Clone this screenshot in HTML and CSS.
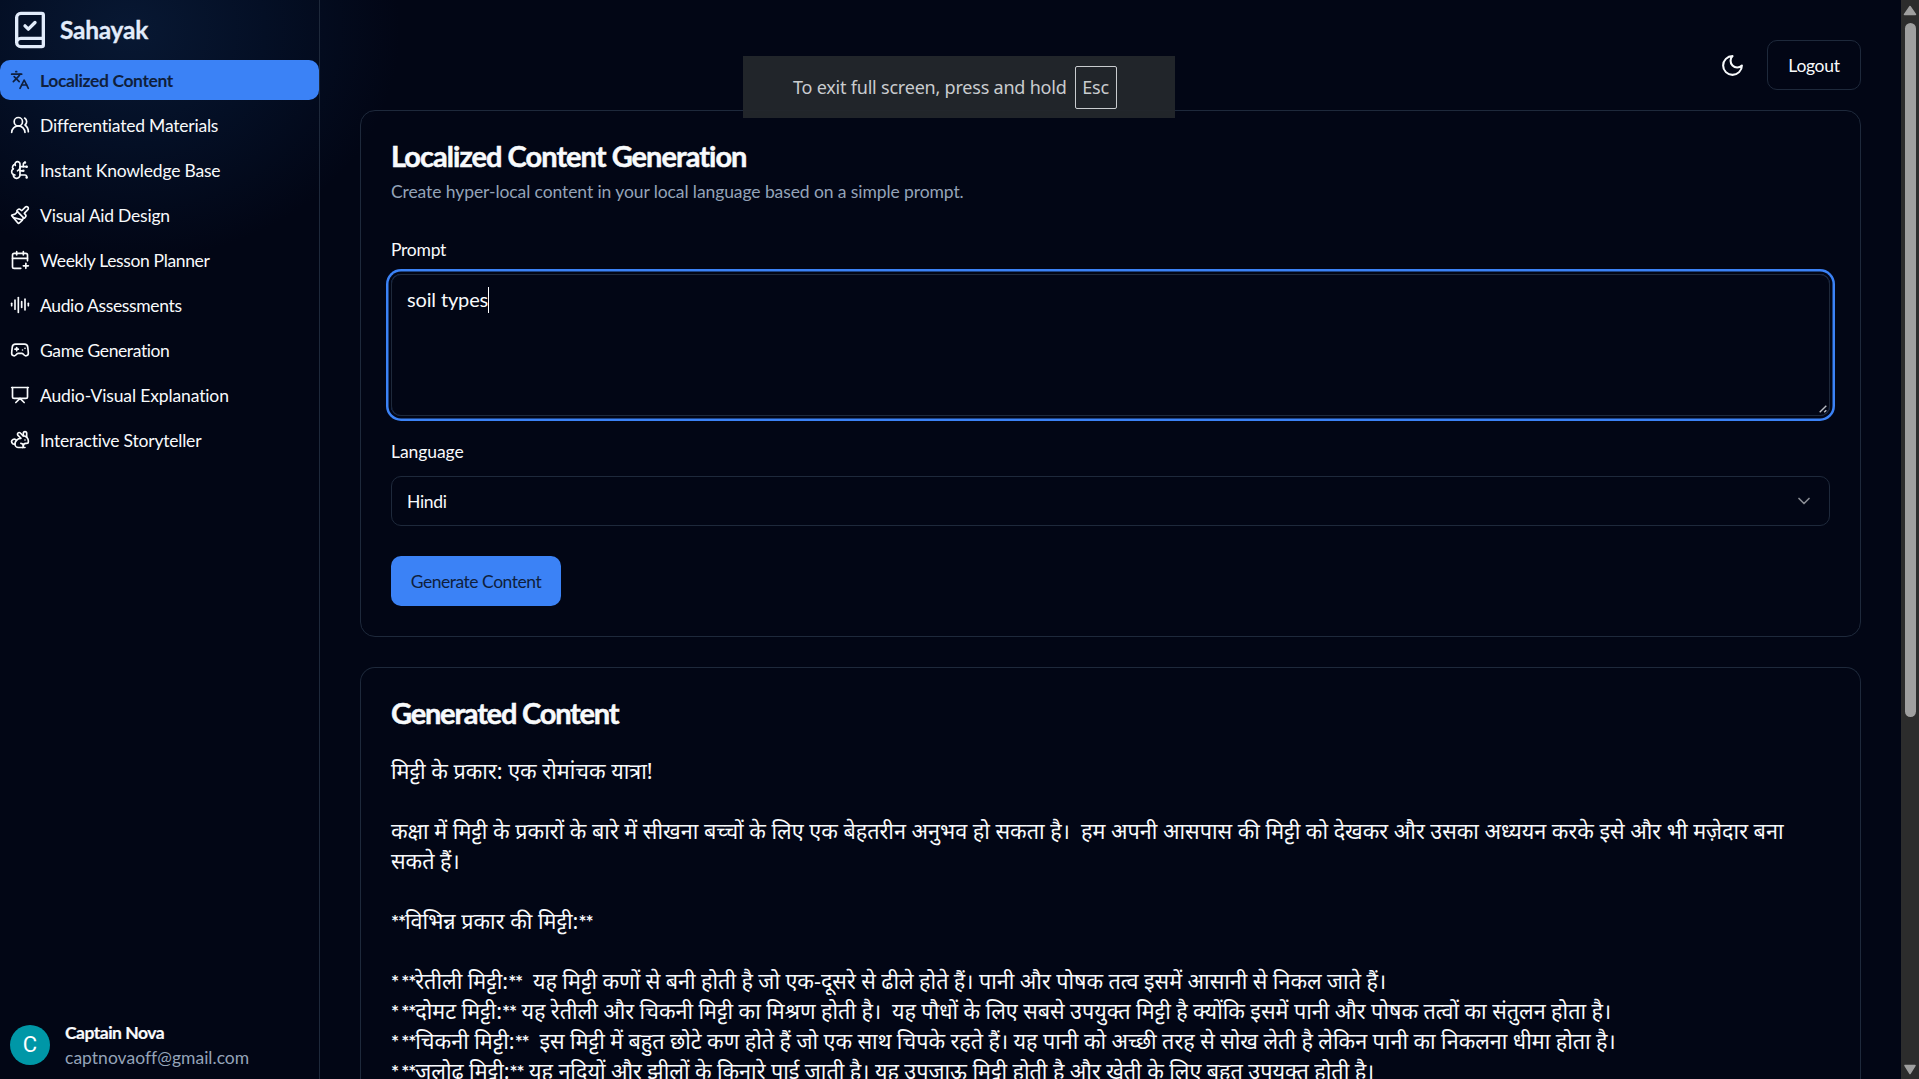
FILE: index.html
```
<!DOCTYPE html>
<html lang="en">
<head>
<meta charset="utf-8">
<title>Sahayak</title>
<link rel="stylesheet" href="styles.css">
</head>
<body>
<div class="app">
  <aside class="sidebar">
    <header class="brand">
      <svg class="icon brand-icon" viewBox="0 0 24 24"><path d="M4 19.5v-15A2.5 2.5 0 0 1 6.5 2H19a1 1 0 0 1 1 1v18a1 1 0 0 1-1 1H6.5a1 1 0 0 1 0-5H20"/><path d="m9 9.5 2 2 4-4"/></svg>
      <span class="brand-name">Sahayak</span>
    </header>
    <nav class="nav">
      <a class="nav-item active"><svg class="icon" viewBox="0 0 24 24"><path d="m5 8 6 6"/><path d="m4 14 6-6 2-3"/><path d="M2 5h12"/><path d="M7 2h1"/><path d="m22 22-5-10-5 10"/><path d="M14 18h6"/></svg><span>Localized Content</span></a>
      <a class="nav-item"><svg class="icon" viewBox="0 0 24 24"><path d="M18 21a8 8 0 0 0-16 0"/><circle cx="10" cy="8" r="5"/><path d="M22 20c0-3.37-2-6.5-4-8a5 5 0 0 0-.45-8.3"/></svg><span>Differentiated Materials</span></a>
      <a class="nav-item"><svg class="icon" viewBox="0 0 24 24"><path d="M12 5a3 3 0 1 0-5.997.125 4 4 0 0 0-2.526 5.77 4 4 0 0 0 .556 6.588A4 4 0 1 0 12 18Z"/><path d="M9 13a4.5 4.5 0 0 0 3-4"/><path d="M6.003 5.125A3 3 0 0 0 6.401 6.5"/><path d="M3.477 10.896a4 4 0 0 1 .585-.396"/><path d="M6 18a4 4 0 0 1-1.967-.516"/><path d="M12 13h4"/><path d="M12 18h6a2 2 0 0 1 2 2v1"/><path d="M12 8h8"/><path d="M16 8V5a2 2 0 0 1 2-2"/><circle cx="16" cy="13" r=".5"/><circle cx="18" cy="3" r=".5"/><circle cx="20" cy="21" r=".5"/><circle cx="20" cy="8" r=".5"/></svg><span>Instant Knowledge Base</span></a>
      <a class="nav-item"><svg class="icon" viewBox="0 0 24 24"><path d="m14.622 17.897-10.68-2.913"/><path d="M18.376 2.622a1 1 0 1 1 3.002 3.002L17.36 9.643a.5.5 0 0 0 0 .707l.944.944a2.41 2.41 0 0 1 0 3.408l-.944.944a.5.5 0 0 1-.707 0L8.354 7.348a.5.5 0 0 1 0-.707l.944-.944a2.41 2.41 0 0 1 3.408 0l.944.944a.5.5 0 0 0 .707 0z"/><path d="M9 8c-1.804 2.71-3.97 3.46-6.583 3.948a.507.507 0 0 0-.302.819l7.32 8.883a1 1 0 0 0 1.185.204C12.735 20.405 16 16.792 16 15"/></svg><span>Visual Aid Design</span></a>
      <a class="nav-item"><svg class="icon" viewBox="0 0 24 24"><path d="M8 2v4"/><path d="M16 2v4"/><path d="M21 13V6a2 2 0 0 0-2-2H5a2 2 0 0 0-2 2v14a2 2 0 0 0 2 2h8"/><path d="M3 10h18"/><path d="M16 19h6"/><path d="M19 16v6"/></svg><span>Weekly Lesson Planner</span></a>
      <a class="nav-item"><svg class="icon" viewBox="0 0 24 24"><path d="M2 10v3"/><path d="M6 6v11"/><path d="M10 3v18"/><path d="M14 8v7"/><path d="M18 5v13"/><path d="M22 10v3"/></svg><span>Audio Assessments</span></a>
      <a class="nav-item"><svg class="icon" viewBox="0 0 24 24"><path d="M6 11h4"/><path d="M8 9v4"/><path d="M15 12h.01"/><path d="M18 10h.01"/><path d="M17.32 5H6.68a4 4 0 0 0-3.978 3.59c-.006.052-.01.101-.017.152C2.604 9.416 2 14.456 2 16a3 3 0 0 0 3 3c1 0 1.5-.5 2-1l1.414-1.414A2 2 0 0 1 9.828 16h4.344a2 2 0 0 1 1.414.586L17 18c.5.5 1 1 2 1a3 3 0 0 0 3-3c0-1.545-.604-6.584-.685-7.258-.007-.05-.011-.1-.017-.151A4 4 0 0 0 17.32 5z"/></svg><span>Game Generation</span></a>
      <a class="nav-item"><svg class="icon" viewBox="0 0 24 24"><path d="M2 3h20"/><path d="M21 3v11a2 2 0 0 1-2 2H5a2 2 0 0 1-2-2V3"/><path d="m7 21 5-5 5 5"/></svg><span>Audio-Visual Explanation</span></a>
      <a class="nav-item"><svg class="icon" viewBox="0 0 24 24"><path d="M13 16a3 3 0 0 1 2.24 5"/><path d="M18 12h.01"/><path d="M18 21h-8a4 4 0 0 1-4-4 7 7 0 0 1 7-7h.2L9.6 6.4a1 1 0 1 1 2.8-2.8L15.8 7h.2c3.3 0 6 2.7 6 6v1a2 2 0 0 1-2 2h-1a3 3 0 0 0-3 3"/><path d="M20 8.54V4a2 2 0 1 0-4 0v3"/><path d="M7.612 12.524a3 3 0 1 0-1.6 4.3"/></svg><span>Interactive Storyteller</span></a>
    </nav>
    <footer class="user">
      <span class="avatar">C</span>
      <div class="user-text">
        <span class="user-name">Captain Nova</span>
        <span class="user-mail">captnovaoff@gmail.com</span>
      </div>
    </footer>
  </aside>

  <main class="main">
    <div class="toolbar">
      <button class="theme-toggle" aria-label="Theme"><svg class="icon" viewBox="0 0 24 24"><path d="M12 3a6 6 0 0 0 9 9 9 9 0 1 1-9-9Z"/></svg></button>
      <button class="logout">Logout</button>
    </div>

    <section class="card form-card">
      <h1 class="card-title">Localized Content Generation</h1>
      <p class="card-desc">Create hyper-local content in your local language based on a simple prompt.</p>
      <span class="label label-prompt">Prompt</span>
      <div class="prompt-box"><span class="prompt-text">soil types</span><span class="caret"></span>
        <svg class="grip" viewBox="0 0 8 8"><path d="M.7 7.3 7.3.7M5.2 7.3 7.3 5.2"/></svg>
      </div>
      <span class="label label-language">Language</span>
      <div class="select"><span>Hindi</span><svg class="icon" viewBox="0 0 24 24"><path d="m6 9 6 6 6-6"/></svg></div>
      <button class="generate">Generate Content</button>
    </section>

    <section class="card result-card">
      <h2 class="card-title result-title">Generated Content</h2>
      <div class="result" lang="hi">
        <p>मिट्टी के प्रकार: एक रोमांचक यात्रा!</p>
        <p>कक्षा में मिट्टी के प्रकारों के बारे में सीखना बच्चों के लिए एक बेहतरीन अनुभव हो सकता है।  हम अपनी आसपास की मिट्टी को देखकर और उसका अध्ययन करके इसे और भी मज़ेदार बना<br>सकते हैं।</p>
        <p><span class="mark">**</span>विभिन्न प्रकार की मिट्टी:<span class="mark">**</span></p>
        <p class="soil-list"><span class="mark">* **</span>रेतीली मिट्टी:<span class="mark">**</span>  यह मिट्टी कणों से बनी होती है जो एक-दूसरे से ढीले होते हैं। पानी और पोषक तत्व इसमें आसानी से निकल जाते हैं।<br><span class="mark">* **</span>दोमट मिट्टी:<span class="mark">**</span> यह रेतीली और चिकनी मिट्टी का मिश्रण होती है।  यह पौधों के लिए सबसे उपयुक्त मिट्टी है क्योंकि इसमें पानी और पोषक तत्वों का संतुलन होता है।<br><span class="mark">* **</span>चिकनी मिट्टी:<span class="mark">**</span>  इस मिट्टी में बहुत छोटे कण होते हैं जो एक साथ चिपके रहते हैं। यह पानी को अच्छी तरह से सोख लेती है लेकिन पानी का निकलना धीमा होता है।<br><span class="mark">* **</span>जलोढ़ मिट्टी:<span class="mark">**</span> यह नदियों और झीलों के किनारे पाई जाती है। यह उपजाऊ मिट्टी होती है और खेती के लिए बहुत उपयुक्त होती है।</p>
      </div>
    </section>
  </main>

  <div class="scrollbar">
    <svg class="arrow" viewBox="0 0 14 11"><path d="M7 1.5 12.5 9.5H1.5Z"/></svg>
    <div class="track"><div class="thumb"></div></div>
    <svg class="arrow" viewBox="0 0 14 11"><path d="M7 9.5 2 1.5H12Z"/></svg>
  </div>
</div>

<div class="fullscreen-hint"><span>To exit full screen, press and hold</span><kbd>Esc</kbd></div>
</body>
</html>
```
FILE: styles.css
```
* { box-sizing: border-box; }
body {
  margin: 0;
  height: 1079px;
  overflow: hidden;
  background: #020615;
  color: #f8fafc;
  font: 17.5px/25px Lato, "Noto Sans", sans-serif;
}
h1, h2, p { margin: 0; }
button { font: inherit; color: inherit; background: none; padding: 0; border: 0; }
.icon {
  width: 20px;
  height: 20px;
  flex: none;
  fill: none;
  stroke: currentColor;
  stroke-width: 2;
  stroke-linecap: round;
  stroke-linejoin: round;
}
.app {
  display: flex;
  height: 1079px;
  overflow: hidden;
  background: radial-gradient(ellipse 270px 230px at 130px 30px, #081833 0%, #040f25 50%, rgba(2, 6, 21, 0) 100%);
}

.sidebar {
  width: 320px;
  flex: none;
  display: flex;
  flex-direction: column;
  border-right: 1px solid #1e293b;
}
.brand { display: flex; align-items: center; gap: 10px; height: 60px; padding: 10px; color: #e2ecfb; }
.brand-icon { width: 40px; height: 40px; }
.brand-name { font-size: 24.5px; font-weight: 700; letter-spacing: -.25px; line-height: 35px; padding-bottom: 1px; -webkit-text-stroke: .3px; }
.nav { display: flex; flex-direction: column; gap: 5px; flex: 1; }
.nav-item {
  display: flex;
  align-items: center;
  gap: 10px;
  height: 40px;
  padding: 0 10px;
  border-radius: 10px;
  letter-spacing: -.21px;
  white-space: nowrap;
}
.nav-item.active { background: #3b82f6; color: #0f1f3d; font-weight: 700; letter-spacing: -.38px; }
.nav-item:nth-child(5) { letter-spacing: -.36px; }
.nav-item:nth-child(6) { letter-spacing: -.36px; }
.nav-item:nth-child(7) { letter-spacing: -.4px; }
.nav-item:nth-child(8) { letter-spacing: -.13px; }
.user { display: flex; align-items: center; gap: 15px; padding: 0 10px; height: 68px; }
.avatar {
  width: 40px;
  height: 40px;
  border-radius: 50%;
  background: #0097a7;
  color: #fff;
  font: 22px/40px Roboto, sans-serif;
  text-align: center;
}
.user-text { display: flex; flex-direction: column; }
.user-name { font-weight: 700; letter-spacing: -.5px; -webkit-text-stroke: .2px; }
.user-mail { color: #94a3b8; letter-spacing: .02px; }

.main { flex: 1; padding: 40px 40px 0; display: flex; flex-direction: column; min-width: 0; }
.toolbar { display: flex; flex: none; justify-content: flex-end; gap: 10px; height: 50px; margin-bottom: 20px; }
.theme-toggle { width: 50px; display: grid; place-items: center; }
.theme-toggle .icon { width: 25px; height: 25px; }
.logout { width: 94px; border: 1px solid #1e293b; border-radius: 10px; letter-spacing: -.3px; }
.card { border: 1px solid #1e293b; border-radius: 15px; padding: 30px; flex: none; }
.form-card { height: 527px; display: flex; flex-direction: column; margin-bottom: 30px; }
.card-title { font-size: 29px; line-height: 30px; font-weight: 700; letter-spacing: -.97px; -webkit-text-stroke: .5px; }
.result-title { letter-spacing: -1.2px; }
.card-desc { color: #94a3b8; letter-spacing: -.09px; margin: 8px 0 33px; }
.label { letter-spacing: -.25px; }
.label-language { letter-spacing: -.08px; }
.prompt-box {
  position: relative;
  display: flex;
  height: 142px;
  margin: 12px 0 23px;
  padding: 9px 15px;
  border: 1px solid #1e293b;
  border-radius: 10px;
  box-shadow: 0 0 0 2.5px #020615, 0 0 0 5px #3b82f6;
}
.prompt-text { font-size: 20px; line-height: 30px; letter-spacing: -.15px; }
.caret { width: 1px; height: 26px; margin-top: 3px; background: #fff; }
.grip { position: absolute; right: 2px; bottom: 2px; width: 8px; height: 8px; fill: none; stroke: #b8bcc4; stroke-width: 1.4; }
.select {
  display: flex;
  align-items: center;
  justify-content: space-between;
  height: 50px;
  margin: 12px 0 30px;
  padding: 0 15px;
  border: 1px solid #1e293b;
  border-radius: 10px;
  letter-spacing: -.3px;
}
.select .icon { opacity: .55; }
.generate { width: 170px; height: 50px; border-radius: 10px; background: #3b82f6; color: #0f1f3d; letter-spacing: -.48px; }

.result-card { flex: 1; border-bottom: 0; border-radius: 15px 15px 0 0; padding-bottom: 0; min-height: 0; }
.result { margin-top: 28px; font: 21.6px/30px "Noto Sans", sans-serif; }
.result p { white-space: pre; margin-bottom: 30px; }
.soil-list { word-spacing: -.18px; }
.mark { font-family: Lato, sans-serif; font-size: 19px; font-weight: 700; line-height: 1; letter-spacing: -1.1px; }

.scrollbar { width: 18px; flex: none; display: flex; flex-direction: column; align-items: center; padding: 5px 0 4px; background: #2c2c2c; }
.arrow { width: 14px; height: 11px; fill: #9f9f9f; stroke: #9f9f9f; stroke-width: 1.5; stroke-linejoin: round; }
.track { flex: 1; padding-top: 7px; }
.thumb { width: 11px; height: 694px; border-radius: 6px; background: #9f9f9f; }

.fullscreen-hint {
  position: absolute;
  left: 743px;
  top: 56px;
  width: 432px;
  height: 62px;
  display: flex;
  align-items: center;
  gap: 8px;
  padding-left: 50px;
  background: rgba(34, 38, 43, .97);
  color: #c9cccf;
  font: 18px/30px "Noto Sans", sans-serif;
  letter-spacing: -.21px;
}
.fullscreen-hint kbd {
  width: 42px;
  height: 43px;
  border: 1px solid #c9cccf;
  border-radius: 2px;
  font: inherit;
  line-height: 41px;
  text-align: center;
}
```
